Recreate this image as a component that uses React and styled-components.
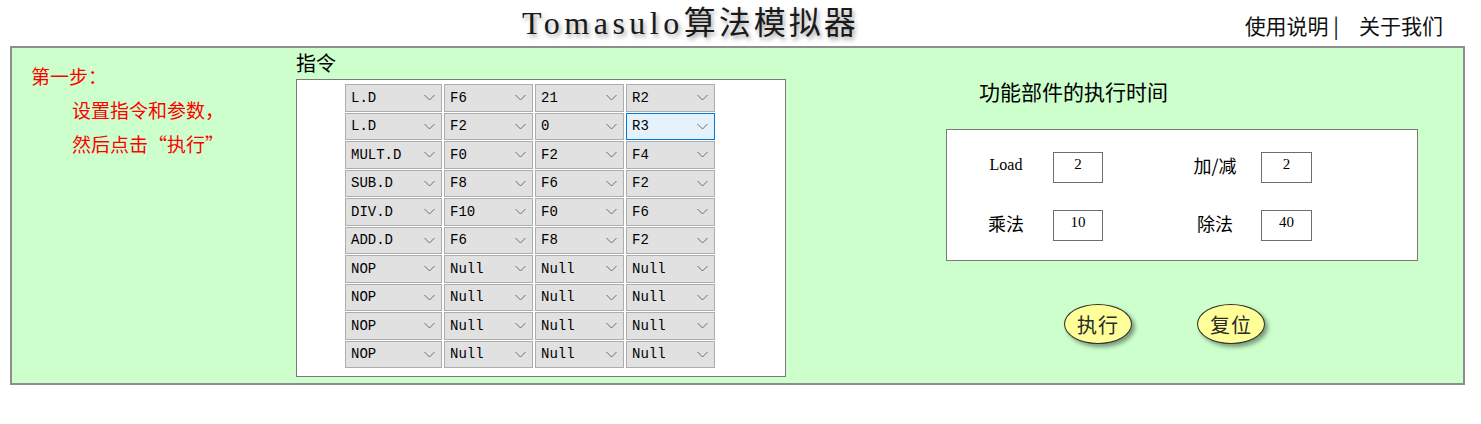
import styled, { createGlobalStyle } from 'styled-components'

const Global = createGlobalStyle`
  html, body {
    margin: 0;
    padding: 0;
    background: #ffffff;
    font-family: 'Noto Sans CJK SC', 'Noto Sans', sans-serif;
  }
`

const Page = styled.div`
  width: 1455px;
  margin-left: 10px;
`

const Header = styled.header`
  display: flex;
  align-items: center;
  height: 46px;
`

const Title = styled.h1`
  margin: 0 0 0 512px;
  font-family: 'Liberation Serif', 'Noto Sans CJK SC', serif;
  font-size: 32px;
  font-weight: normal;
  letter-spacing: 3px;
  color: #1a1a1a;
  text-shadow: 2px 3px 4px rgba(0, 0, 0, 0.35);
  line-height: 46px;
`

const Latin = styled.span`
  letter-spacing: 4.5px;
`

const Links = styled.nav`
  margin-left: auto;
  margin-right: 22px;
  display: flex;
  gap: 20px;
  font-size: 21px;
  color: #111;
  padding-top: 4px;
`

const Panel = styled.section`
  display: flex;
  height: 335px;
  background: #ccffcc;
  border: 2px solid #8e8e8e;
`

const StepCol = styled.div`
  width: 284px;
  padding-top: 11px;
  color: #ff0000;
  font-size: 19px;
  line-height: 34px;
`

const StepHead = styled.div`
  padding-left: 19px;
`

const StepBody = styled.div`
  width: 272px;
  text-align: center;
`

const InstrCol = styled.div`
  width: 490px;
  display: flex;
  flex-direction: column;
`

const Label = styled.div`
  font-size: 20px;
  line-height: 24px;
  padding-top: 3px;
  color: #000;
`

const InstrBox = styled.div`
  margin-top: 4px;
  background: #fff;
  border: 1px solid #7a7a7a;
  padding: 4px 0 0 48px;
  box-sizing: border-box;
  height: 298px;
`

const Grid = styled.div`
  display: grid;
  grid-template-columns: 97px 89px 89px 89px;
  grid-auto-rows: 27.5px;
  column-gap: 2px;
  row-gap: 1px;
  width: 372px;
`

const Select = styled.div`
  display: flex;
  align-items: center;
  justify-content: space-between;
  padding: 0 6px 0 5px;
  background: ${(p) => (p.$focus ? '#e5f1fb' : '#e1e1e1')};
  border: 1px solid ${(p) => (p.$focus ? '#0078d7' : '#adadad')};
  font-family: 'Liberation Mono', monospace;
  font-size: 14px;
  color: #000;
  box-sizing: border-box;
`

const Chevron = () => (
  <svg width="11" height="7" viewBox="0 0 11 7">
    <path d="M0.5 1 L5.5 6 L10.5 1" fill="none" stroke="#6d6d6d" strokeWidth="1" />
  </svg>
)

const TimeCol = styled.div`
  margin-left: 160px;
  width: 472px;
  display: flex;
  flex-direction: column;
`

const TimeTitle = styled.div`
  font-size: 21px;
  line-height: 28px;
  padding: 29px 0 0 33px;
  color: #000;
`

const TimeBox = styled.div`
  margin-top: 24px;
  height: 132px;
  box-sizing: border-box;
  background: #fff;
  border: 1px solid #7a7a7a;
  padding: 22px 0 0 31px;
  display: grid;
  grid-template-columns: 209px auto;
  grid-auto-rows: 31px;
  row-gap: 27px;
`

const Param = styled.div`
  display: flex;
  align-items: center;
  gap: ${(p) => p.$gap || 19}px;
`

const ParamLabel = styled.div`
  width: 56px;
  text-align: center;
  font-size: ${(p) => (p.$latin ? 16 : 18)}px;
  font-family: ${(p) => (p.$latin ? "'Liberation Serif', serif" : "'Noto Sans CJK SC', sans-serif")};
  margin-top: -5px;
  color: #000;
`

const ParamInput = styled.div`
  width: ${(p) => p.$w || 50}px;
  height: 31px;
  box-sizing: border-box;
  border: 1px solid #6e6e6e;
  background: #fff;
  font-family: 'Liberation Serif', serif;
  font-size: 15px;
  text-align: center;
  padding-top: 3px;
  color: #000;
`

const Actions = styled.div`
  display: flex;
  gap: 65px;
  padding: 43px 0 0 118px;
`

const OvalButton = styled.button`
  width: 68px;
  height: 40px;
  border-radius: 50%;
  border: 1.5px solid #2e2e2e;
  background: #ffff99;
  box-shadow: 3px 3px 4px rgba(0, 0, 0, 0.4);
  font-family: 'Noto Sans CJK SC', sans-serif;
  font-size: 20px;
  color: #2a2a2a;
  padding: 0;
  letter-spacing: 1px;
`

const rows = [
  ['L.D', 'F6', '21', 'R2'],
  ['L.D', 'F2', '0', 'R3'],
  ['MULT.D', 'F0', 'F2', 'F4'],
  ['SUB.D', 'F8', 'F6', 'F2'],
  ['DIV.D', 'F10', 'F0', 'F6'],
  ['ADD.D', 'F6', 'F8', 'F2'],
  ['NOP', 'Null', 'Null', 'Null'],
  ['NOP', 'Null', 'Null', 'Null'],
  ['NOP', 'Null', 'Null', 'Null'],
  ['NOP', 'Null', 'Null', 'Null'],
]

export default function App() {
  return (
    <Page>
      <Global />
      <Header>
        <Title>
          <Latin>Tomasulo</Latin>算法模拟器
        </Title>
        <Links>
          <span>使用说明 |</span>
          <span>关于我们</span>
        </Links>
      </Header>
      <Panel>
        <StepCol>
          <StepHead>第一步：</StepHead>
          <StepBody>
            设置指令和参数，
            <br />
            然后点击“执行”
          </StepBody>
        </StepCol>
        <InstrCol>
          <Label>指令</Label>
          <InstrBox>
            <Grid>
              {rows.map((row, r) =>
                row.map((v, c) => (
                  <Select key={`${r}-${c}`} $focus={r === 1 && c === 3}>
                    <span>{v}</span>
                    <Chevron />
                  </Select>
                ))
              )}
            </Grid>
          </InstrBox>
        </InstrCol>
        <TimeCol>
          <TimeTitle>功能部件的执行时间</TimeTitle>
          <TimeBox>
            <Param>
              <ParamLabel $latin>Load</ParamLabel>
              <ParamInput>2</ParamInput>
            </Param>
            <Param $gap={18}>
              <ParamLabel>加/减</ParamLabel>
              <ParamInput $w={51}>2</ParamInput>
            </Param>
            <Param>
              <ParamLabel>乘法</ParamLabel>
              <ParamInput>10</ParamInput>
            </Param>
            <Param $gap={18}>
              <ParamLabel>除法</ParamLabel>
              <ParamInput $w={51}>40</ParamInput>
            </Param>
          </TimeBox>
          <Actions>
            <OvalButton>执行</OvalButton>
            <OvalButton>复位</OvalButton>
          </Actions>
        </TimeCol>
      </Panel>
    </Page>
  )
}
